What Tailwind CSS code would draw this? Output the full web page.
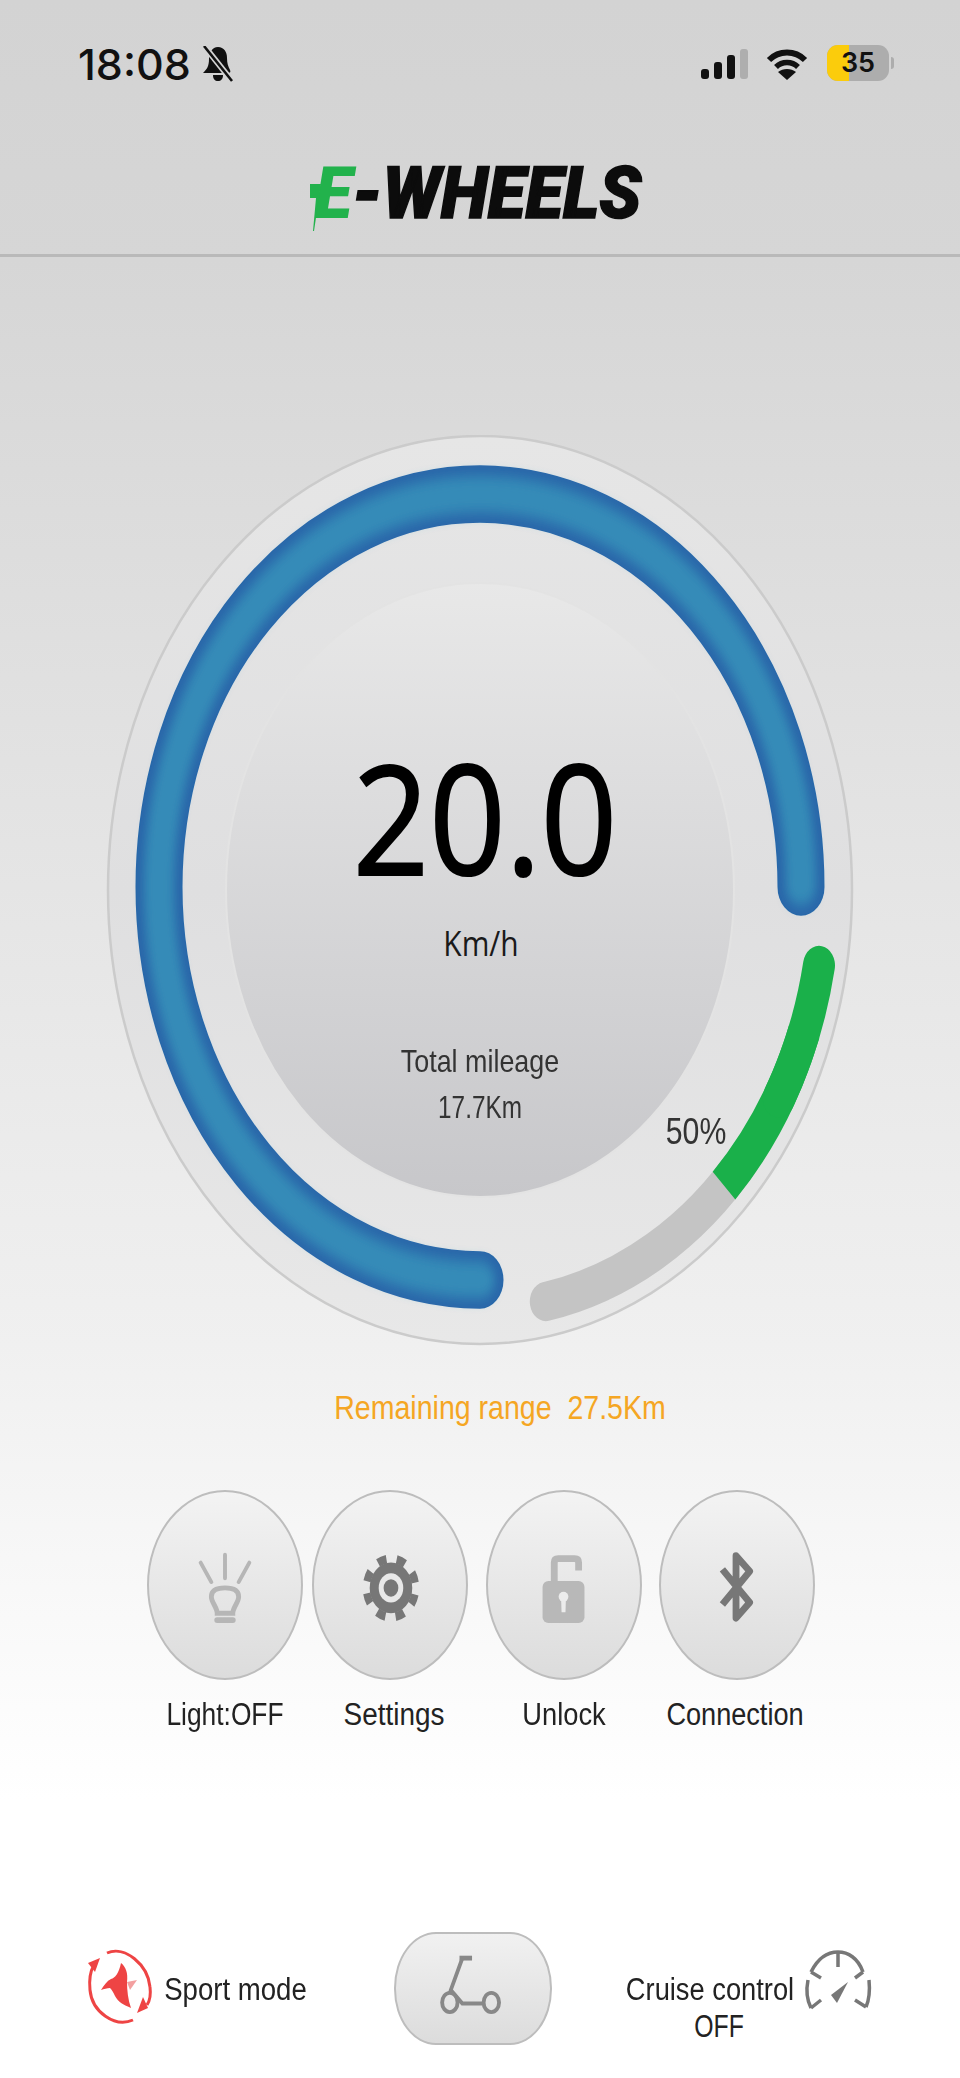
<!DOCTYPE html>
<html lang="en">
<head>
    <meta charset="UTF-8">
    <meta name="viewport" content="width=device-width, initial-scale=1.0">
    <title>E-Wheels</title>
    <script src="https://cdn.jsdelivr.net/npm/@tailwindcss/browser@4"></script>
</head>
<body class="font-['Liberation_Sans',sans-serif] text-[#222]">
    <div class="w-[960px] h-[2078px] overflow-hidden flex flex-col bg-[linear-gradient(to_bottom,#d3d3d3_0,#d6d6d6_260px,#f0f0f0_1345px,#ffffff_1800px)]">

        <!-- status bar + logo -->
        <header class="h-[257px] border-b-[3px] border-[#b9b9b9] flex flex-col">
            <div class="flex items-start h-[100px] pt-[42px] pl-[78px]">
                <span class="font-['Inter',sans-serif] font-medium text-[43px] leading-[44px] text-[#111] w-[122px] whitespace-nowrap">18:08</span>
                <svg class="w-[36px] h-[36px] mt-[4px]" viewBox="0 0 34 36">
                    <path d="M17 1 C11 1 8 7 8 13 C8 20 6 23 2 27 H27 C29 27 30 26 29 24 C27 20 26 17 26 12 C26 6 23 1 17 1 Z M12 29 H22 C22 33 20 35 17 35 C14 35 12 33 12 29 Z" fill="#111"/>
                    <path d="M4 1 L31 35" stroke="#d4d4d4" stroke-width="6"/>
                    <path d="M3 0 L31 35" stroke="#111" stroke-width="2.6"/>
                </svg>
                <svg class="ml-[465px] mt-[6px] w-[48px] h-[32px]" viewBox="0 0 48 32">
                    <rect x="0" y="21" width="8" height="10" rx="3" fill="#111"/>
                    <rect x="13" y="14" width="8" height="17" rx="3" fill="#111"/>
                    <rect x="26" y="7" width="8" height="24" rx="3" fill="#111"/>
                    <rect x="39" y="1" width="8" height="30" rx="3" fill="#aeaeae"/>
                </svg>
                <svg class="ml-[17px] mt-[5px] w-[42px] h-[34px]" viewBox="0 0 42 34">
                    <path d="M3 13 C13 3 29 3 39 13" fill="none" stroke="#111" stroke-width="6"/>
                    <path d="M10 20 C16 14 26 14 32 20" fill="none" stroke="#111" stroke-width="5.5"/>
                    <path d="M21 33 L12 25 C17 21 25 21 30 25 Z" fill="#111"/>
                </svg>
                <div class="ml-[19px] mt-[3px] relative w-[62px] h-[36px] rounded-[11px] overflow-hidden bg-[#adadad] flex items-center justify-center">
                    <div class="absolute left-0 top-0 h-full w-[22px] bg-[#fbcc0c]"></div>
                    <span class="relative font-['Inter',sans-serif] font-semibold text-[27px] leading-[36px] text-[#111]">35</span>
                </div>
                <div class="ml-[2px] mt-[15px] w-[3px] h-[12px] rounded-r-full bg-[#adadad]"></div>
            </div>
            <div class="relative h-[80px] mt-[54px] flex justify-center">
                <span class="font-['Roboto',sans-serif] font-black italic text-[72px] leading-[80px] whitespace-nowrap scale-x-[0.96] text-[#0c0c0c] ml-[-4px] [-webkit-text-stroke:1.5px_#0c0c0c]"><span class="text-[#22b24c] [-webkit-text-stroke:0]">E</span>-WHEELS</span>
                <svg class="absolute left-[308px] top-[30px] w-[14px] h-[48px]" viewBox="0 0 14 48">
                    <polygon points="2,0 13,0 6,47 5,47 8,14 2,14" fill="#22b24c"/>
                </svg>
            </div>
        </header>

        <!-- speed gauge -->
        <section class="relative mt-[178px] mx-auto w-[748px] h-[912px] shrink-0 flex flex-col">
            <svg class="absolute inset-0 w-[748px] h-[912px]" viewBox="0 0 748 912">
                <defs>
                    <linearGradient id="discFill" x1="0" y1="0" x2="0" y2="1">
                        <stop offset="0" stop-color="#e6e6e6"/>
                        <stop offset="0.5" stop-color="#dfdfe0"/>
                        <stop offset="1" stop-color="#e8e8e8"/>
                    </linearGradient>
                    <linearGradient id="coreFill" x1="0" y1="0" x2="0" y2="1">
                        <stop offset="0" stop-color="#e8e8e8"/>
                        <stop offset="1" stop-color="#c7c7ca"/>
                    </linearGradient>
                    <filter id="soft" x="-20%" y="-20%" width="140%" height="140%">
                        <feGaussianBlur stdDeviation="5"/>
                    </filter>
                </defs>
                <ellipse cx="374" cy="455" rx="372" ry="454" fill="url(#discFill)" stroke="#cbcbcb" stroke-width="2.5"/>
                <ellipse cx="374" cy="455" rx="254" ry="307" fill="url(#coreFill)" stroke="#e3e3e3" stroke-width="2"/>
                <g transform="translate(374 452) scale(1 1.224)" fill="none" stroke-linecap="round">
                    <path d="M321 0 A321 321 0 1 0 0 321" stroke="#2966a9" stroke-width="47"/>
                    <path d="M321 0 A321 321 0 1 0 0 321" stroke="#348bb8" stroke-width="30" filter="url(#soft)"/>
                </g>
                <g transform="translate(374 452) scale(1 1.224)" fill="none" stroke-width="32">
                    <path d="M264.3 221.8 A345 345 0 0 1 65.8 338.7" stroke="#c4c4c4" stroke-linecap="round"/>
                    <path d="M324.2 118 A345 345 0 0 1 244 244" stroke="#1ab04a"/>
                    <path d="M339 64.1 A345 345 0 0 1 298.8 172.5" stroke="#1ab04a" stroke-linecap="round"/>
                </g>
            </svg>
            <div class="relative flex flex-col">
                <div class="mt-[298px] h-[168px] flex justify-center font-['Open_Sans',sans-serif] font-medium text-[152px] leading-[168px] text-black scale-x-[0.88] translate-x-[5px] [-webkit-text-stroke:2px_#000]">20.0</div>
                <div class="mt-[22px] h-[40px] flex justify-center font-['Open_Sans',sans-serif] text-[34px] leading-[40px] scale-x-[0.88] translate-x-[1px] text-[#1a1a1a]">Km/h</div>
                <div class="mt-[75px] h-[46px] flex justify-center text-[32px] leading-[46px] scale-x-[0.84] text-[#333]">Total mileage</div>
                <div class="h-[46px] flex justify-center text-[32px] leading-[46px] scale-x-[0.76] text-[#333]">17.7Km</div>
            </div>
            <span class="absolute left-[554px] top-[675px] text-[36px] leading-[44px] scale-x-[0.84] text-[#333]">50%</span>
        </section>

        <div class="mt-[41px] h-[40px] flex justify-center text-[33px] leading-[40px] whitespace-pre scale-x-[0.865] translate-x-[20px] text-[#f5a623]">Remaining range  27.5Km</div>

        <!-- round buttons -->
        <div class="mt-[62px] pl-[147px] flex">
            <button class="w-[156px] h-[190px] rounded-[50%] border-2 border-[#bdbdbd] bg-linear-to-b from-[#f3f3f3] to-[#dcdcdc]">
                <svg viewBox="0 0 156 190" class="w-full h-full" fill="none" stroke="#b6b6b6">
                    <path d="M78 64 V88 M53 72 L64 92 M103 72 L92 92" stroke-width="4" stroke-linecap="round"/>
                    <path d="M70 124 C70 118 64 113 64 107 C64 100 70 98 78 98 C86 98 92 100 92 107 C92 113 86 118 86 124 Z" stroke-width="5"/>
                    <path d="M70 131 H86" stroke-width="6" stroke-linecap="round"/>
                </svg>
            </button>
            <button class="ml-[9px] w-[156px] h-[190px] rounded-[50%] border-2 border-[#bdbdbd] bg-linear-to-b from-[#f3f3f3] to-[#dcdcdc]">
                <svg viewBox="0 0 156 190" class="w-full h-full">
                    <g transform="translate(79 98) scale(0.84 1)">
                        <circle r="30" fill="none" stroke="#777" stroke-width="9" stroke-dasharray="11 12.56" stroke-dashoffset="-6.8"/>
                        <circle r="26" fill="#777"/>
                        <circle r="15" fill="#e8e8e8"/>
                        <circle r="9" fill="#777"/>
                    </g>
                </svg>
            </button>
            <button class="ml-[18px] w-[156px] h-[190px] rounded-[50%] border-2 border-[#bdbdbd] bg-linear-to-b from-[#f3f3f3] to-[#dcdcdc]">
                <svg viewBox="0 0 156 190" class="w-full h-full">
                    <path d="M68 94 V72 Q68 68 72 68 H89 Q93 68 93 72 V80" fill="none" stroke="#b8b8b8" stroke-width="7"/>
                    <rect x="56" y="91" width="43" height="43" rx="6" fill="#b8b8b8"/>
                    <circle cx="77.5" cy="107" r="5" fill="#ececec"/>
                    <polygon points="75,108 80,108 79.5,123 75.5,123" fill="#ececec"/>
                </svg>
            </button>
            <button class="ml-[17px] w-[156px] h-[190px] rounded-[50%] border-2 border-[#bdbdbd] bg-linear-to-b from-[#f3f3f3] to-[#dcdcdc]">
                <svg viewBox="0 0 156 190" class="w-full h-full">
                    <path d="M63 79 L91 113 L77 129 V65 L91 81 L63 115" fill="none" stroke="#777" stroke-width="7" stroke-linejoin="round"/>
                </svg>
            </button>
        </div>

        <div class="mt-[15px] pl-[147px] flex h-[40px] text-[31px] leading-[40px] text-[#222]">
            <div class="w-[156px] flex justify-center whitespace-nowrap scale-x-[0.85]">Light:OFF</div>
            <div class="ml-[9px] w-[156px] flex justify-center whitespace-nowrap scale-x-[0.9] translate-x-[4px]">Settings</div>
            <div class="ml-[18px] w-[156px] flex justify-center whitespace-nowrap scale-x-[0.88]">Unlock</div>
            <div class="ml-[17px] w-[156px] flex justify-center whitespace-nowrap scale-x-[0.875] translate-x-[-2px]">Connection</div>
        </div>

        <!-- bottom bar -->
        <div class="mt-[197px] pl-[80px] flex items-start">
            <svg class="mt-[8px] w-[80px] h-[95px]" viewBox="0 0 80 95">
                <g fill="none" stroke="#ee4444" stroke-width="3">
                    <path d="M27 13 C45 5 68 25 70 47 C71 55 69 62 67 65"/>
                    <path d="M53 80 C35 88 12 72 10 50 C9 40 11 30 14 25"/>
                </g>
                <polygon points="57,73 68,68 63,57" fill="#ee4444"/>
                <polygon points="8,23 20,18 15,32" fill="#ee4444"/>
                <path d="M41 23 C46 27 48 33 47 42 C47 50 48 60 51 68 C44 65 38 62 35 56 C33 52 32 50 30 48 C27 48 24 49 21 50 C24 45 27 41 31 39 C35 38 39 33 41 23 Z" fill="#ee4444"/>
                <polygon points="47,42 57,40 50,50" fill="#f3a0a0"/>
            </svg>
            <div class="ml-[5px] mt-[38px] w-[141px] h-[40px] flex justify-center text-[31px] leading-[40px] whitespace-nowrap scale-x-[0.89]">Sport mode</div>
            <button class="ml-[88px] w-[158px] h-[113px] rounded-[42px/56px] border-2 border-[#bdbdbd] bg-linear-to-b from-[#f1f1f1] to-[#dcdcdc]">
                <svg viewBox="0 0 158 113" class="w-full h-full" fill="none" stroke="#888">
                    <path d="M65 25 H78" stroke-width="5"/>
                    <path d="M68 25 L56 58 L55 62 M56 58 L68 72 H89" stroke-width="4"/>
                    <ellipse cx="55" cy="71" rx="8" ry="10" stroke-width="4"/>
                    <ellipse cx="98" cy="71" rx="8" ry="10" stroke-width="4"/>
                </svg>
            </button>
            <div class="ml-[75px] w-[166px] mt-[38px] flex flex-col text-[31px] leading-[40px]">
                <div class="flex justify-center whitespace-nowrap scale-x-[0.88]">Cruise control</div>
                <div class="flex justify-center whitespace-nowrap scale-x-[0.8] translate-x-[9px] mt-[-3px]">OFF</div>
            </div>
            <svg class="ml-[5px] mt-[8px] w-[80px] h-[80px]" viewBox="0 0 80 80" fill="none" stroke="#777" stroke-width="3.5">
                <path d="M13 32 C20 18 30 12 40 12 C50 12 60 18 65 32"/>
                <path d="M10 40 C8 50 9 60 13 68"/>
                <path d="M71 40 C72 50 71 60 68 67"/>
                <path d="M40 12 V27 M13 32 L23 38 M65 32 L57 38 M13 68 L23 60 M68 67 L57 60"/>
                <polygon points="50,42 33,55 39,63" fill="#777" stroke="none"/>
            </svg>
        </div>
    </div>
</body>
</html>
